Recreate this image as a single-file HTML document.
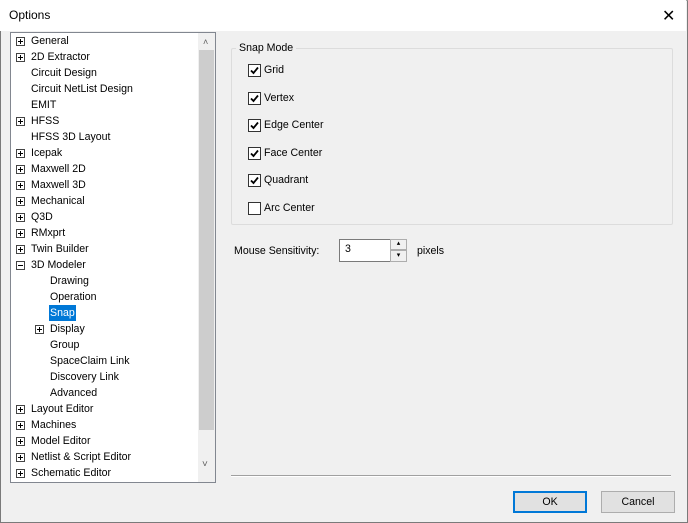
<!DOCTYPE html>
<html><head><style>
*{margin:0;padding:0;box-sizing:border-box}
body{width:688px;height:523px;overflow:hidden;background:#f0f0f0;font-family:"Liberation Sans",sans-serif;font-size:10.6px;color:#000;position:relative}
.win{position:absolute;left:0;top:0;width:688px;height:523px;border:1px solid #7a7a7a;border-top-color:#aaa}
.title{position:absolute;left:0;top:0;width:686px;height:31px;background:#fff}
.title span{position:absolute;left:9px;top:8px;font-size:12px}
.x{position:absolute;left:662px;top:6px;font-size:16px;font-weight:300}
.tree{position:absolute;left:10px;top:32px;width:206px;height:451px;background:#fff;border:1px solid #828790;overflow:hidden}
.it{position:absolute;height:16px;line-height:17px;white-space:nowrap}
.pb{position:absolute;width:9px;height:9px;border:1px solid #444;background:#fff}
.pb:before{content:"";position:absolute;left:1px;top:3px;width:5px;height:1px;background:#000}
.pb.p:after{content:"";position:absolute;left:3px;top:1px;width:1px;height:5px;background:#000}
.sb{position:absolute;left:187px;top:0;width:17px;height:449px;background:#f0f0f0}
.thumb{position:absolute;left:1px;top:17px;width:15px;height:380px;background:#cdcdcd}
.grp{position:absolute;left:231px;top:48px;width:442px;height:177px;border:1px solid #dcdcdc;border-radius:2px}
.grpt{position:absolute;left:236px;top:42px;background:#f0f0f0;padding:0 3px}
.cb{position:absolute;left:248px;width:13px;height:13px;border:1px solid #333;background:#fff}
.cl{position:absolute;left:264px}
.btn{position:absolute;top:491px;width:74px;height:22px;background:#e1e1e1;border:1px solid #adadad;text-align:center;line-height:20px}
</style></head><body>
<div class="win"></div>
<div class="title"><span>Options</span><div class="x">✕</div></div>
<div class="tree">
<div class="sb"><div style="position:absolute;left:5px;top:4px;font-size:9px;color:#606060">&#x2C4;</div><div class="thumb"></div><div style="position:absolute;left:4px;top:426px;font-size:10px;color:#606060">&#x2C5;</div></div>
</div>
<div id="tr"></div>
<div class="grp"></div><div class="grpt">Snap Mode</div>
<div id="cbs"></div>
<div style="position:absolute;left:234px;top:245px">Mouse Sensitivity:</div>
<div style="position:absolute;left:339px;top:239px;width:52px;height:23px;background:#fff;border:1px solid #7a7a7a;border-right:none;padding:3px 0 0 5px">3</div>
<div style="position:absolute;left:390px;top:239px;width:17px;height:11px;background:#f0f0f0;border:1px solid #adadad;font-size:7px;text-align:center;line-height:8px">▴</div>
<div style="position:absolute;left:390px;top:250px;width:17px;height:12px;background:#f0f0f0;border:1px solid #adadad;font-size:7px;text-align:center;line-height:9px">▾</div>
<div style="position:absolute;left:417px;top:245px">pixels</div>
<div style="position:absolute;left:231px;top:475px;width:440px;height:1px;background:#a0a0a0"></div>
<div style="position:absolute;left:231px;top:476px;width:440px;height:1px;background:#fff"></div>
<div class="btn" style="left:513px;border:1px solid #0078d7;box-shadow:inset 0 0 0 1px #0078d7">OK</div>
<div class="btn" style="left:601px">Cancel</div>
<script>
var items=[["General",0,"p"],["2D Extractor",0,"p"],["Circuit Design",0],["Circuit NetList Design",0],["EMIT",0],["HFSS",0,"p"],["HFSS 3D Layout",0],["Icepak",0,"p"],["Maxwell 2D",0,"p"],["Maxwell 3D",0,"p"],["Mechanical",0,"p"],["Q3D",0,"p"],["RMxprt",0,"p"],["Twin Builder",0,"p"],["3D Modeler",0,"m"],["Drawing",1],["Operation",1],["Snap",1,null,1],["Display",1,"p"],["Group",1],["SpaceClaim Link",1],["Discovery Link",1],["Advanced",1],["Layout Editor",0,"p"],["Machines",0,"p"],["Model Editor",0,"p"],["Netlist & Script Editor",0,"p"],["Schematic Editor",0,"p"]];
var h="";items.forEach(function(a,i){var y=33+i*16;var x=a[1]?50:31;
if(y>466)return;
if(a[2])h+='<div class="pb '+(a[2]=="p"?"p":"")+'" style="left:'+(x-15)+'px;top:'+(y+4)+'px"></div>';
var st=a[3]?'background:#0078d7;color:#fff;padding:0 1px;left:'+(x-1)+'px':'left:'+x+'px';
h+='<div class="it" style="top:'+y+'px;'+st+'">'+a[0].replace("&","&amp;")+'</div>';});
h='<div style="position:absolute;left:11px;top:33px;width:187px;height:449px;overflow:hidden"><div style="position:absolute;left:-11px;top:-33px">'+h+'</div></div>';
document.getElementById("tr").innerHTML=h;
var c=[["Grid",70,1],["Vertex",98,1],["Edge Center",125,1],["Face Center",153,1],["Quadrant",180,1],["Arc Center",208,0]];var s="";
c.forEach(function(a){s+='<div class="cb" style="top:'+(a[1]-6)+'px">'+(a[2]?'<svg width="11" height="11" style="position:absolute;left:0;top:0"><path d="M2 5.5L4.5 8L9 2.5" stroke="#000" stroke-width="1.8" fill="none"/></svg>':'')+'</div><div class="cl" style="top:'+(a[1]-6)+'px">'+a[0]+'</div>';});
document.getElementById("cbs").innerHTML=s;
</script>
</body></html>
